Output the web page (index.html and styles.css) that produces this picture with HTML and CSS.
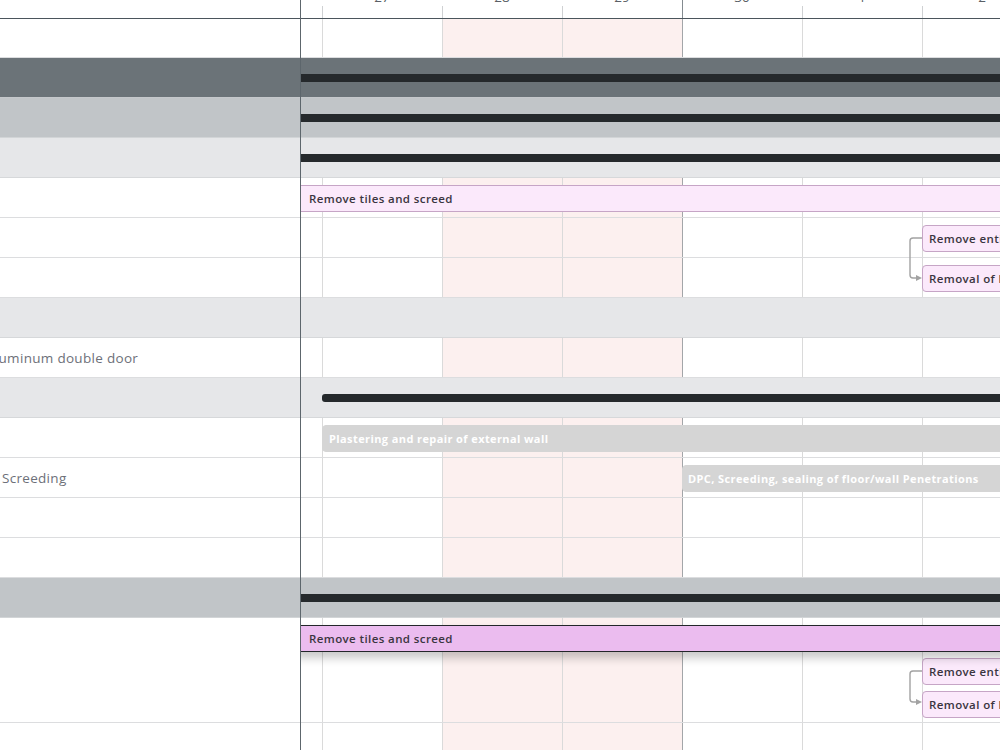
FILE: index.html
```html
<!DOCTYPE html>
<html lang="en">
<head>
  <meta charset="UTF-8" />
  <meta name="viewport" content="width=device-width, initial-scale=1.0"/>
  <title>Renovation schedule</title>
  <link rel="stylesheet" href="styles.css">
</head>
<body>
  <div class="gantt">

    <!-- task names -->
    <section class="grid">
      <div class="grid-header"></div>
      <div class="grid-body">
        <div class="row first"></div>
        <div class="row level-1"></div>
        <div class="row level-2"></div>
        <div class="row level-3"></div>
        <div class="row"></div>
        <div class="row"></div>
        <div class="row"></div>
        <div class="row level-3"></div>
        <div class="row"><span class="name">Aluminum double door</span></div>
        <div class="row level-3"></div>
        <div class="row"></div>
        <div class="row"><span class="name sub">Screeding</span></div>
        <div class="row"></div>
        <div class="row"></div>
        <div class="row level-2"></div>
        <div class="row tall"></div>
        <div class="row"></div>
      </div>
    </section>

    <div class="splitter"></div>

    <!-- timeline -->
    <section class="schedule">
      <div class="time-axis">
        <div class="day partial"></div>
        <div class="day"><span>27</span></div>
        <div class="day"><span>28</span></div>
        <div class="day"><span>29</span></div>
        <div class="day week-start"><span>30</span></div>
        <div class="day"><span>1</span></div>
        <div class="day"><span>2</span></div>
      </div>

      <div class="schedule-body">
        <div class="columns">
          <div class="col partial"></div>
          <div class="col"></div>
          <div class="col weekend"></div>
          <div class="col weekend"></div>
          <div class="col week-start"></div>
          <div class="col"></div>
          <div class="col"></div>
        </div>

        <div class="row first"></div>
        <div class="row level-1"><div class="summary" style="left:-6px;width:760px"></div></div>
        <div class="row level-2"><div class="summary" style="left:-6px;width:760px"></div></div>
        <div class="row level-3"><div class="summary" style="left:-6px;width:760px"></div></div>
        <div class="row">
          <div class="task" style="left:-6px;width:760px;padding-left:13px">Remove tiles and screed</div>
        </div>
        <div class="row">
          <div class="task" style="left:621px;width:160px">Remove entire tiles</div>
          <svg class="link" width="30" height="80" viewBox="0 0 30 80">
            <path d="M21 20 H12 Q9 20 9 23 V57 Q9 60 12 60 H16"/>
            <polygon points="15,57 21,60 15,63"/>
          </svg>
        </div>
        <div class="row">
          <div class="task" style="left:621px;width:160px">Removal of bathtub</div>
        </div>
        <div class="row level-3"></div>
        <div class="row"></div>
        <div class="row level-3"><div class="summary rounded" style="left:21px;width:760px"></div></div>
        <div class="row">
          <div class="task inactive" style="left:21px;width:760px">Plastering and repair of external wall</div>
        </div>
        <div class="row">
          <div class="task inactive" style="left:381px;width:400px;padding-left:5px">DPC, Screeding, sealing of floor/wall Penetrations</div>
        </div>
        <div class="row"></div>
        <div class="row"></div>
        <div class="row level-2"><div class="summary" style="left:-6px;width:760px"></div></div>
        <div class="row tall">
          <div class="task dragging" style="left:-6px;width:760px;padding-left:13px">Remove tiles and screed</div>
          <div class="task" style="left:621px;width:160px;top:40px">Remove entire tiles</div>
          <div class="task" style="left:621px;width:160px;top:73px">Removal of bathtub</div>
          <svg class="link" width="30" height="80" viewBox="0 0 30 80" style="top:33px">
            <path d="M21 20 H12 Q9 20 9 23 V48 Q9 51 12 51 H16"/>
            <polygon points="15,48 21,51 15,54"/>
          </svg>
        </div>
        <div class="row"></div>
      </div>
    </section>

  </div>
</body>
</html>
```

FILE: styles.css
```css
* {
  box-sizing: border-box;
}
body {
  margin: 0;
  font-family: "Open Sans", Arial, sans-serif;
  background: #fff;
  color: #3b3f45;
  overflow: hidden;
}
.gantt {
  display: flex;
  height: 750px;
  overflow: hidden;
}

/* left grid */
.grid {
  width: 300px;
  flex: none;
  overflow: hidden;
}
.grid-header {
  height: 19px;
  border-bottom: 1px solid #4b555c;
}
.splitter {
  width: 1px;
  flex: none;
  background: #5d666c;
}
.row {
  position: relative;
  height: 40px;
  border-bottom: 1px solid #dcdddf;
}
.row.first {
  height: 39px;
}
.row.tall {
  height: 105px;
}
.row.level-1 {
  background: #6b7378;
  border-bottom-color: #c5c8cb;
}
.row.level-2 {
  background: #c1c5c8;
  border-bottom-color: #d2d5d7;
}
.row.level-3 {
  background: #e6e7e9;
  border-bottom-color: #d6d8da;
}
.grid .row {
  display: flex;
  align-items: center;
}
.name {
  margin-left: -14px;
  font-size: 13.5px;
  letter-spacing: 0.3px;
  color: #6d7079;
  white-space: nowrap;
}
.name.sub {
  margin-left: 2px;
}

/* timeline */
.schedule {
  flex: 1;
  overflow: hidden;
  position: relative;
}
.time-axis {
  display: grid;
  grid-template-columns: 21px repeat(6, 120px);
  height: 19px;
  border-bottom: 1px solid #4b555c;
  overflow: hidden;
}
.day {
  position: relative;
  text-align: center;
  font-size: 13.5px;
  color: #5a5f66;
}
.day span {
  display: block;
  line-height: 14px;
  margin-top: -10px;
}
.day::before {
  content: "";
  position: absolute;
  left: 0;
  top: 6px;
  bottom: 0;
  border-left: 1px solid #cfd1d3;
}
.day.partial::before {
  display: none;
}
.day.week-start::before {
  top: 0;
  border-left-color: #848b90;
}

.schedule-body {
  position: relative;
}
.columns {
  position: absolute;
  inset: 0;
  display: grid;
  grid-template-columns: 21px repeat(6, 120px);
}
.col {
  border-left: 1px solid #dadada;
}
.col.partial {
  border-left: none;
}
.col.weekend {
  background: #fcf0ef;
}
.col.week-start {
  border-left-color: #a3a6a9;
}

/* bars */
.summary {
  position: absolute;
  top: 16px;
  height: 8px;
  background: #25292c;
}
.summary.rounded {
  border-radius: 3px;
}
.task {
  position: absolute;
  top: 7px;
  height: 27px;
  padding-left: 6px;
  display: flex;
  align-items: center;
  font-size: 11.5px;
  letter-spacing: 0.4px;
  font-weight: 600;
  color: #3a3540;
  white-space: nowrap;
  background: #fbe9fb;
  border: 1px solid #c6a5c6;
  border-radius: 4px;
}
.task.inactive {
  background: #d5d5d5;
  border-color: #d5d5d5;
  color: #fff;
  font-size: 11px;
  font-weight: 700;
}
.task.dragging {
  background: #ebbcef;
  border-color: #23262a;
  border-radius: 0;
  box-shadow: 0 6px 10px rgba(0, 0, 0, 0.22);
  z-index: 2;
}
.link {
  position: absolute;
  left: 600px;
  top: 0;
  overflow: visible;
  z-index: 1;
}
.link path {
  fill: none;
  stroke: #a2a2a2;
  stroke-width: 1.4;
}
.link polygon {
  fill: #a2a2a2;
}
```
